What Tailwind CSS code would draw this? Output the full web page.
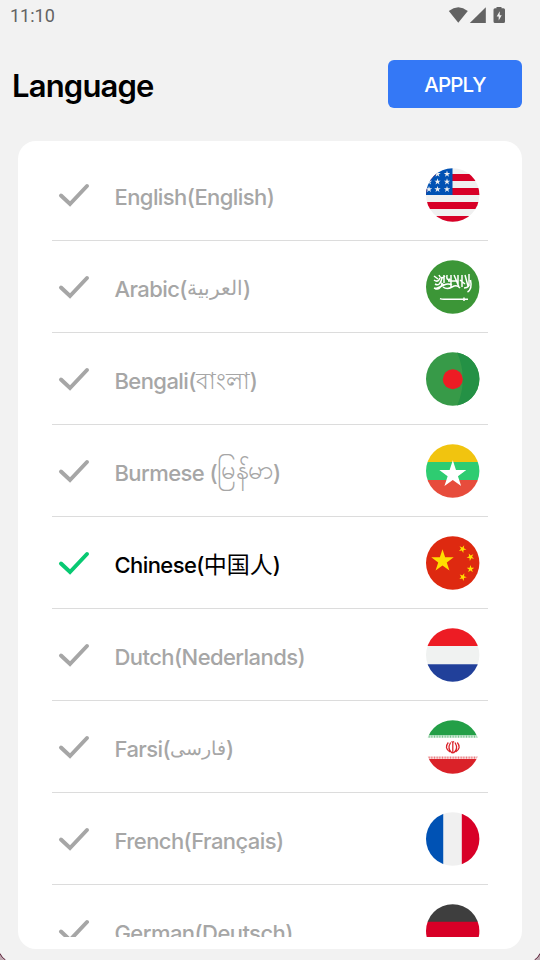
<!DOCTYPE html>
<html lang="en">
<head>
<meta charset="utf-8">
<title>Language</title>
<script src="https://cdn.jsdelivr.net/npm/@tailwindcss/browser@4"></script>
</head>
<body class="bg-[#f2f2f2]">
<svg class="absolute h-0 w-0">
  <defs>
    <symbol id="check" viewBox="0 0 32 24"><path d="M3 12.5 12 21 29 3" fill="none" stroke="currentColor" stroke-width="4" stroke-linecap="round" stroke-linejoin="miter"/></symbol>
    <clipPath id="disc"><circle cx="26.700" cy="27" r="26.700"/></clipPath>
    <path id="star" d="M0-1 .2245-.309 .951-.309 .363.118 .588.809 0 .382-.588.809-.363.118-.951-.309-.2245-.309Z"/>
  </defs>
</svg>
<div class="relative flex h-[960px] w-[540px] flex-col overflow-hidden bg-[#f2f2f2] font-['Inter','Noto_Sans_CJK_SC','Noto_Sans',sans-serif]">
  <header class="flex h-8 items-center justify-between pl-[10px] pr-[35px] text-[#636363]">
    <span class="font-['Roboto',sans-serif] text-[18px] font-[450] leading-8">11:10</span>
    <svg class="h-[18px] w-[57px]" viewBox="0 0 57 18" fill="currentColor">
      <path d="M.8 3.900Q10.300-3.200 19.800 3.900L10.300 15.800Z"/>
      <path d="M37.800 .2V16H21.800Z"/>
      <path fill-rule="evenodd" d="M48.500-.3h5v1.500h2q1.500 0 1.500 1.500v11.800q0 1.500-1.500 1.500h-8.500q-1.500 0-1.500-1.500V2.700q0-1.500 1.500-1.500h1.500ZM51.700 4.300 48.700 9.500h2v4l3-5.200h-2Z"/>
    </svg>
  </header>
  <div class="flex h-[109px] items-start justify-between pl-[12px] pr-[18px] pt-7">
    <h1 class="text-[31px] font-[560] leading-[52px] tracking-[-0.82px] text-black">Language</h1>
    <button class="h-12 w-[134px] rounded-md bg-[#3478f6] text-[20.5px] font-[450] leading-[50px] text-white tracking-[-0.8px]">APPLY</button>
  </div>
  <main class="mx-[18px] h-[808px] rounded-[18px] bg-white px-[34px] pt-2">
    <ul class="h-[788px] overflow-hidden text-[22px] font-[480] leading-[30px] tracking-[-0.58px] text-[#a6a6a6]">
      <li class="flex h-[92px] items-start border-b border-[#dcdcdc] pl-1.5 pr-[8.5px] pt-[19px]">
        <svg class="mt-[15px] h-6 w-8"><use href="#check"/></svg>
        <span class="ml-[24.5px] mt-[13.5px] h-[30px] flex-1 whitespace-nowrap">English(English)</span>
        <svg class="h-[54px] w-[54px]" viewBox="0 0 54 54"><g clip-path="url(#disc)"><path fill="#f0f0f0" d="M0 0h54v54H0z"/><path fill="#d80027" d="M0 6h54v7H0zM0 20h54v7H0zM0 34h54v7H0zM0 48h54v6H0z"/><path fill="#0052b4" d="M0 0h26.500v27H0z"/><g fill="#f0f0f0"><use href="#star" transform="translate(11.500 6)scale(3.400)"/><use href="#star" transform="translate(21 6)scale(3.400)"/><use href="#star" transform="translate(3 13.700)scale(3.400)"/><use href="#star" transform="translate(11.500 13.700)scale(3.400)"/><use href="#star" transform="translate(21 13.700)scale(3.400)"/><use href="#star" transform="translate(3 21.300)scale(3.400)"/><use href="#star" transform="translate(11.500 21.300)scale(3.400)"/><use href="#star" transform="translate(21 21.300)scale(3.400)"/></g></g></svg>
      </li>
      <li class="flex h-[92px] items-start border-b border-[#dcdcdc] pl-1.5 pr-[8.5px] pt-[19px]">
        <svg class="mt-[15px] h-6 w-8"><use href="#check"/></svg>
        <span class="ml-[24.5px] mt-[13.5px] h-[30px] flex-1 whitespace-nowrap">Arabic(<bdi class="relative -top-0.5 text-[19.7px] leading-none tracking-normal font-normal">العربية</bdi>)</span>
        <svg class="h-[54px] w-[54px]" viewBox="0 0 54 54"><g clip-path="url(#disc)"><path fill="#3c9637" d="M0 0h54v54H0z"/><g fill="none" stroke="#fff" stroke-width="1.500"><path d="M8 16l4 3M8 20q4 3 6-2M9 24q5 3 7-6M8 28q6 3 8-4M13 15q2 5 6 1M18 15v8M21 15q-1 6 3 4M25 15v13M28 15l5 12M32 15v10M36 15v12M39 15l3 11M43 14v12M9 29q5-2 9-4t8 0M17 27q4 3 9 0t8 1M22 21h8M14 22l4 3M34 20l5 4M38 28q3 0 5-2M44.500 20q2 9-3 12"/><path d="M14 38.600q2 .9 5 .7h23M38 37.600v3.400"/></g></g></svg>
      </li>
      <li class="flex h-[92px] items-start border-b border-[#dcdcdc] pl-1.5 pr-[8.5px] pt-[19px]">
        <svg class="mt-[15px] h-6 w-8"><use href="#check"/></svg>
        <span class="ml-[24.5px] mt-[13.5px] h-[30px] flex-1 whitespace-nowrap">Bengali(<bdi class="text-[22.7px] leading-none tracking-normal font-[480]">বাংলা</bdi>)</span>
        <svg class="h-[54px] w-[54px]" viewBox="0 0 54 54"><g clip-path="url(#disc)"><path fill="#379a48" d="M0 0h54v54H0z"/><path fill="#249145" d="M31 0Q42.500 27 31 54H54V0Z"/><circle cx="26.800" cy="27.300" r="10" fill="#ed1c24"/></g></svg>
      </li>
      <li class="flex h-[92px] items-start border-b border-[#dcdcdc] pl-1.5 pr-[8.5px] pt-[19px]">
        <svg class="mt-[15px] h-6 w-8"><use href="#check"/></svg>
        <span class="ml-[24.5px] mt-[13.5px] h-[30px] flex-1 whitespace-nowrap">Burmese (<bdi class="relative -top-[2px] text-[25.5px] leading-none tracking-normal font-normal">မြန်မာ</bdi>)</span>
        <svg class="h-[54px] w-[54px]" viewBox="0 0 54 54"><g clip-path="url(#disc)"><path fill="#f1c40f" d="M0 0h54v18H0z"/><path fill="#2ecc71" d="M0 18h54v18H0z"/><path fill="#e74c3c" d="M0 36h54v18H0z"/><use href="#star" fill="#fff" transform="translate(26.800 30.500)scale(14.200)"/></g></svg>
      </li>
      <li class="flex h-[92px] items-start border-b border-[#dcdcdc] pl-1.5 pr-[8.5px] pt-[19px] text-black">
        <svg class="mt-[15px] h-6 w-8 text-[#07c972]"><use href="#check"/></svg>
        <span class="ml-[24.5px] mt-[13.5px] h-[30px] flex-1 whitespace-nowrap">Chinese(<bdi class="text-[23px] leading-none tracking-normal font-normal">中国人</bdi>)</span>
        <svg class="h-[54px] w-[54px]" viewBox="0 0 54 54"><g clip-path="url(#disc)"><path fill="#de2910" d="M0 0h54v54H0z"/><g fill="#ffde00"><use href="#star" transform="translate(16.500 25)scale(11.800)"/><use href="#star" transform="translate(36.500 13)rotate(25)scale(4)"/><use href="#star" transform="translate(44.500 21)rotate(45)scale(4)"/><use href="#star" transform="translate(44.500 33)scale(4)"/><use href="#star" transform="translate(36.800 41)rotate(22)scale(4)"/></g></g></svg>
      </li>
      <li class="flex h-[92px] items-start border-b border-[#dcdcdc] pl-1.5 pr-[8.5px] pt-[19px]">
        <svg class="mt-[15px] h-6 w-8"><use href="#check"/></svg>
        <span class="ml-[24.5px] mt-[13.5px] h-[30px] flex-1 whitespace-nowrap">Dutch(Nederlands)</span>
        <svg class="h-[54px] w-[54px]" viewBox="0 0 54 54"><g clip-path="url(#disc)"><path fill="#ed1c24" d="M0 0h54v18H0z"/><path fill="#f0f2f1" d="M0 18h54v18.300H0z"/><path fill="#21409a" d="M0 36.300h54v18H0z"/></g></svg>
      </li>
      <li class="flex h-[92px] items-start border-b border-[#dcdcdc] pl-1.5 pr-[8.5px] pt-[19px]">
        <svg class="mt-[15px] h-6 w-8"><use href="#check"/></svg>
        <span class="ml-[24.5px] mt-[13.5px] h-[30px] flex-1 whitespace-nowrap">Farsi(<bdi class="relative -top-0.5 text-[18.500px] leading-none tracking-normal font-normal">فارسی</bdi>)</span>
        <svg class="h-[54px] w-[54px]" viewBox="0 0 54 54"><g clip-path="url(#disc)"><path fill="#fff" d="M0 0h54v54H0z"/><path fill="#239f47" d="M0 0h54v15.300H0z"/><path fill="#da2128" d="M0 39h54v15H0z"/><path stroke="#239f47" stroke-opacity=".6" stroke-width="2.400" stroke-dasharray="1 .6" d="M0 16.600h54"/><path stroke="#da2128" stroke-opacity=".6" stroke-width="2.400" stroke-dasharray="1 .6" d="M0 37.600h54"/><g fill="none" stroke="#da2128" stroke-width="1.250"><path d="M26.800 21.500v12M24.600 22.500q-3.800 6.500 1.400 10.500M29 22.500q3.800 6.500-1.400 10.500M22.300 22.500q-4.500 5.500 1.700 9.500M31.300 22.500q4.500 5.500-1.700 9.500M25.500 21.500l1.300.7 1.300-.7"/></g></g></svg>
      </li>
      <li class="flex h-[92px] items-start border-b border-[#dcdcdc] pl-1.5 pr-[8.5px] pt-[19px]">
        <svg class="mt-[15px] h-6 w-8"><use href="#check"/></svg>
        <span class="ml-[24.5px] mt-[13.5px] h-[30px] flex-1 whitespace-nowrap">French(Français)</span>
        <svg class="h-[54px] w-[54px]" viewBox="0 0 54 54"><g clip-path="url(#disc)"><path fill="#0052b4" d="M0 0h17.500v54H0z"/><path fill="#f0f0f0" d="M17.500 0h18.300v54H17.500z"/><path fill="#d80027" d="M35.800 0H54v54H35.800z"/></g></svg>
      </li>
      <li class="flex h-[92px] items-start border-b border-[#dcdcdc] pl-1.5 pr-[8.5px] pt-[19px]">
        <svg class="mt-[15px] h-6 w-8"><use href="#check"/></svg>
        <span class="ml-[24.5px] mt-[13.5px] h-[30px] flex-1 whitespace-nowrap">German(Deutsch)</span>
        <svg class="h-[54px] w-[54px]" viewBox="0 0 54 54"><g clip-path="url(#disc)"><path fill="#3e3e3e" d="M0 0h54v18H0z"/><path fill="#d80027" d="M0 17.700h54V36H0z"/><path fill="#ffda44" d="M0 36h54v18H0z"/></g></svg>
      </li>
    </ul>
  </main>
  <svg class="absolute bottom-0 left-0 h-2 w-2" viewBox="0 0 8 8"><path d="M0 1.500Q1.500 5.500 5.500 8H0Z" fill="#bda8b0"/><path d="M0 1.500Q1.500 5.500 5.500 8" fill="none" stroke="#5c2038"/></svg>
  <svg class="absolute bottom-0 right-0 h-2 w-2" viewBox="0 0 8 8"><path d="M8 1.500Q6.500 5.500 2.500 8H8Z" fill="#bda8b0"/><path d="M8 1.500Q6.500 5.500 2.500 8" fill="none" stroke="#5c2038"/></svg>
</div>
</body>
</html>
